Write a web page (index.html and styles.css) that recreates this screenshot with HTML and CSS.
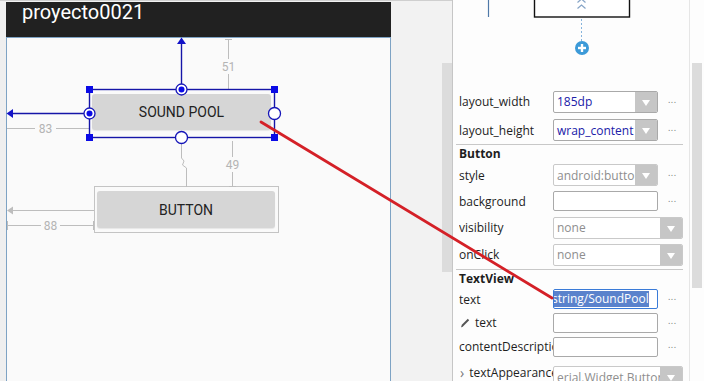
FILE: index.html
```html
<!DOCTYPE html>
<html lang="es">
  <head>
    <meta charset="UTF-8" />
    <title>proyecto0021 - Design</title>
    <link rel="stylesheet" href="styles.css">
  </head>
  <body>
    <div class="editor">
      <div class="design">
        <div class="gutter"></div>
        <div class="device">
          <div class="appbar"><span class="app-title">proyecto0021</span></div>
          <div class="screen">
            <div class="btn btn-sound">SOUND POOL</div>
            <div class="widget-box">
              <div class="btn btn-plain">BUTTON</div>
            </div>
          </div>
        </div>
        <div class="outside">
          <div class="thumb thumb-left"></div>
        </div>
      </div>

      <div class="panel">
        <div class="panel-body">
          <svg class="tree" width="236" height="87" viewBox="0 0 236 87">
            <line x1="35.5" y1="0" x2="35.5" y2="17" stroke="#4f79a8" stroke-width="1.2" />
            <rect x="81.5" y="-5" width="95" height="22" fill="#fff" stroke="#111" stroke-width="1.4" />
            <polyline points="124.5,2.5 128.5,-1 132.5,2.5" fill="none" stroke="#86a4c6" stroke-width="1.2" />
            <polyline points="124.5,8.5 128.5,5 132.5,8.5" fill="none" stroke="#86a4c6" stroke-width="1.2" />
            <line x1="128.5" y1="19" x2="128.5" y2="41" stroke="#86b4dc" stroke-width="1" stroke-dasharray="2 2" />
            <circle cx="129" cy="48" r="7" fill="#3c9ad8" />
            <line x1="125" y1="48" x2="133" y2="48" stroke="#fff" stroke-width="2.4" />
            <line x1="129" y1="44" x2="129" y2="52" stroke="#fff" stroke-width="2.4" />
          </svg>

          <div class="props">
            <div class="row r-width">
              <span class="label">layout_width</span>
              <div class="field drop"><span class="val blue">185dp</span><span class="arrow"></span></div>
              <span class="more">...</span>
            </div>
            <div class="row r-height">
              <span class="label">layout_height</span>
              <div class="field drop"><span class="val blue">wrap_content</span><span class="arrow"></span></div>
              <span class="more">...</span>
            </div>
            <div class="sep"></div>
            <div class="section">Button</div>
            <div class="row r-style">
              <span class="label">style</span>
              <div class="field drop muted"><span class="val grey">android:button</span><span class="arrow"></span></div>
              <span class="more">...</span>
            </div>
            <div class="row r-bg">
              <span class="label">background</span>
              <div class="field input"></div>
              <span class="more">...</span>
            </div>
            <div class="row r-vis">
              <span class="label">visibility</span>
              <div class="field drop wide muted"><span class="val grey">none</span><span class="arrow"></span></div>
            </div>
            <div class="row r-click">
              <span class="label">onClick</span>
              <div class="field drop wide muted"><span class="val grey">none</span><span class="arrow"></span></div>
            </div>
            <div class="sep"></div>
            <div class="section">TextView</div>
            <div class="row r-text">
              <span class="label">text</span>
              <div class="field input focused"><span class="sel">string/SoundPool</span><span class="caret"></span></div>
              <span class="more">...</span>
            </div>
            <div class="row r-tools">
              <span class="label">
                <svg class="brush" width="10" height="10" viewBox="0 0 10 10">
                  <path d="M1 9.5 L1.8 6.8 L7.8 0.8 L9.2 2.2 L3.2 8.2 Z" fill="#555" />
                </svg>text</span>
              <div class="field input"></div>
              <span class="more">...</span>
            </div>
            <div class="row r-desc">
              <span class="label">contentDescription</span>
              <div class="field input"></div>
              <span class="more">...</span>
            </div>
            <div class="row r-appear">
              <span class="label"><span class="chev">›</span>textAppearance</span>
              <div class="field drop wide muted"><span class="val grey">erial.Widget.Button</span><span class="arrow"></span></div>
            </div>
          </div>
        </div>
        <div class="vscroll">
          <div class="thumb thumb-right"></div>
        </div>
      </div>

      <!-- constraint handles and the drag line drawn over the editor -->
      <svg class="overlay" width="704" height="381" viewBox="0 0 704 381">
        <g stroke="#bdbdbd" stroke-width="1" fill="none">
          <line x1="228.5" y1="39" x2="228.5" y2="59" />
          <line x1="228.5" y1="74" x2="228.5" y2="89" />
          <line x1="225" y1="39.5" x2="232" y2="39.5" />
          <line x1="7" y1="128.5" x2="35" y2="128.5" />
          <line x1="56" y1="128.5" x2="89" y2="128.5" />
          <line x1="232.5" y1="141" x2="232.5" y2="157" />
          <line x1="232.5" y1="172" x2="232.5" y2="186" />
          <line x1="229" y1="186.5" x2="236" y2="186.5" />
          <line x1="12" y1="210.5" x2="94" y2="210.5" />
          <line x1="7" y1="225.5" x2="41" y2="225.5" />
          <line x1="60" y1="225.5" x2="94" y2="225.5" />
          <line x1="7.5" y1="221" x2="7.5" y2="230" />
          <line x1="93.5" y1="221" x2="93.5" y2="230" />
          <path d="M181.5 143 L181.5 158 L184 161 L182.5 165 L186.5 168 L186.5 187" />
        </g>
        <polygon points="7,210.5 13,206.5 13,214.5" fill="#bdbdbd" />
        <line x1="225" y1="89.5" x2="232" y2="89.5" stroke="#b8b8e0" stroke-width="1" />
        <line x1="229" y1="137.5" x2="236" y2="137.5" stroke="#b8b8e0" stroke-width="1" />
        <g class="dim" fill="#b4b4b4">
          <text x="228.5" y="71" text-anchor="middle">51</text>
          <text x="45.5" y="133" text-anchor="middle">83</text>
          <text x="232.5" y="169" text-anchor="middle">49</text>
          <text x="50.5" y="230" text-anchor="middle">88</text>
        </g>

        <g stroke="#1515a8" stroke-width="1.4" fill="none">
          <rect x="89.5" y="89.5" width="185" height="48" />
          <line x1="181.5" y1="84" x2="181.5" y2="43" />
          <line x1="84" y1="113.5" x2="12" y2="113.5" />
        </g>
        <polygon points="181.5,37.5 177,44 186,44" fill="#1212c8" />
        <polygon points="6.5,113.5 13,109 13,118" fill="#1212c8" />
        <g fill="#0a0ae6">
          <rect x="86" y="86" width="7" height="7" />
          <rect x="271" y="86" width="7" height="7" />
          <rect x="86" y="134" width="7" height="7" />
          <rect x="271" y="134" width="7" height="7" />
        </g>
        <g fill="#fff" stroke="#1515b8" stroke-width="1.3">
          <circle cx="181.5" cy="89.5" r="5.5" />
          <circle cx="89.5" cy="113.5" r="5.5" />
          <circle cx="274.5" cy="113.5" r="6" />
          <circle cx="181.5" cy="137.5" r="6" />
        </g>
        <circle cx="181.5" cy="89.5" r="3" fill="#0a0ae6" />
        <circle cx="89.5" cy="113.5" r="3" fill="#0a0ae6" />

        <line x1="261" y1="122" x2="552" y2="298" stroke="#d42027" stroke-width="2.8" stroke-linecap="round" />
      </svg>
    </div>
  </body>
</html>
```

FILE: styles.css
```css
body {
  margin: 0;
  font-family: "Open Sans", "Noto Sans", sans-serif;
  font-size: 12px;
  color: #1e1e1e;
  background-color: #fdfdfd;
  overflow: hidden;
}
.editor {
  position: relative;
  display: flex;
  width: 704px;
  height: 381px;
  overflow: hidden;
}
.design {
  display: flex;
  width: 452px;
  border-top: 1px solid #cfcfcf;
  background-color: #f2f2f2;
}
.gutter {
  width: 6px;
  background-color: #efefef;
}
.device {
  width: 385px;
  display: flex;
  flex-direction: column;
  padding-top: 1px;
}
.appbar {
  height: 35px;
  background-color: #212121;
  color: #fff;
  font-family: Roboto, sans-serif;
  font-size: 20px;
  padding-left: 16px;
}
.app-title {
  display: block;
  line-height: 24px;
  margin-top: -2px;
}
.screen {
  position: relative;
  flex: 1;
  background-color: #fafafa;
  border: 1px solid #7ea3c4;
  border-bottom: none;
}
.btn {
  display: flex;
  align-items: center;
  justify-content: center;
  background-color: #d6d6d6;
  border-radius: 3px;
  color: #222;
  font-family: Roboto, sans-serif;
  font-size: 14px;
  box-shadow: 0 1px 1px rgba(0, 0, 0, 0.08);
}
.btn-sound {
  position: absolute;
  left: 85px;
  top: 56px;
  width: 179px;
  height: 36px;
}
.widget-box {
  position: absolute;
  left: 87px;
  top: 148px;
  width: 178px;
  height: 37px;
  border: 1px solid #c4c4c4;
  padding: 4px 3px 4px 2px;
}
.btn-plain {
  width: 178px;
  height: 37px;
}
.outside {
  flex: 1;
  display: flex;
  justify-content: flex-end;
}
.thumb {
  width: 10px;
  background-color: #dcdcdc;
}
.thumb-left {
  margin-top: 62px;
  height: 209px;
}
.panel {
  display: flex;
  width: 251px;
  border-left: 1px solid #c6c6c6;
  background-color: #fdfdfd;
}
.panel-body {
  width: 236px;
}
.tree {
  display: block;
}
.vscroll {
  width: 12px;
  border-left: 1px solid #e6e6e6;
  padding-left: 2px;
}
.thumb-right {
  margin-top: 63px;
  height: 225px;
}
.props {
  padding-left: 6px;
}
.row {
  display: flex;
  align-items: center;
}
.label {
  display: flex;
  align-items: center;
  width: 94px;
  white-space: nowrap;
  overflow: hidden;
  color: #1e1e1e;
}
.field {
  position: relative;
  display: flex;
  align-items: center;
  width: 105px;
  box-sizing: border-box;
  background-color: #fff;
  border: 1px solid #a9a9a9;
  border-radius: 2px;
  overflow: hidden;
}
.field.wide {
  width: 130px;
}
.field.drop {
  height: 22px;
}
.field.input {
  height: 20px;
}
.field.muted {
  border-color: #c9c9c9;
}
.val {
  flex: 1;
  padding-left: 3px;
  white-space: nowrap;
  overflow: hidden;
}
.val.blue {
  color: #2020a8;
}
.val.grey {
  color: #8e8e8e;
}
.arrow {
  align-self: stretch;
  width: 22px;
  background-color: #c6c6c6;
  position: relative;
}
.arrow::after {
  content: "";
  position: absolute;
  left: 7px;
  top: 8px;
  border-left: 4px solid transparent;
  border-right: 4px solid transparent;
  border-top: 6px solid #fff;
}
.more {
  margin-left: 10px;
  color: #777;
  font-size: 9px;
  letter-spacing: 0.5px;
  padding-bottom: 5px;
}
.sep {
  margin: 0 6px 0 -3px;
  border-top: 1px solid #c8c8c8;
}
.section {
  height: 18px;
  line-height: 18px;
  font-weight: bold;
}
.r-width { height: 29px; }
.r-height { height: 28px; }
.r-style { height: 24px; }
.r-bg { height: 28px; }
.r-vis { height: 25px; }
.r-click { height: 29px; }
.r-text { height: 22px; }
.r-tools { height: 25px; }
.r-desc { height: 23px; }
.r-appear {
  height: 30px;
  align-items: flex-start;
}
.r-appear .label {
  height: 28px;
}
.r-appear .field {
  margin-top: 8px;
}
.focused {
  border-color: #3a7bd8;
  padding: 1px 3px 1px 0;
}
.sel {
  display: block;
  height: 16px;
  line-height: 16px;
  background-color: #5a82cc;
  color: #fff;
  white-space: nowrap;
  overflow: hidden;
  width: 95px;
  text-indent: -2px;
}
.caret {
  width: 1px;
  height: 16px;
  background-color: #fff;
}
.brush {
  margin: 0 5px 0 1px;
}
.chev {
  color: #777;
  font-size: 14px;
  margin: 0 5px 0 1px;
}
.overlay {
  position: absolute;
  left: 0;
  top: 0;
  pointer-events: none;
}
.dim {
  font-family: Roboto, sans-serif;
  font-size: 12px;
}
```
